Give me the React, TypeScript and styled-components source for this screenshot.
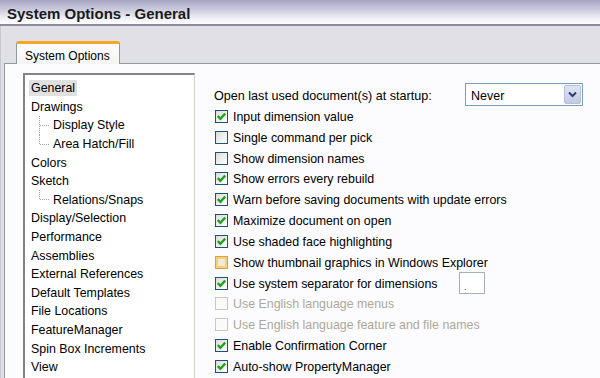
import React from "react";
import styled, { createGlobalStyle } from "styled-components";

const GlobalStyle = createGlobalStyle`
  html, body {
    margin: 0;
    padding: 0;
    width: 600px;
    height: 378px;
    overflow: hidden;
    background: #e1e0e6;
  }
  #root {
    height: 100%;
  }
`;

const navItems = [
  { label: "General", selected: true },
  { label: "Drawings" },
  { label: "Display Style", child: "mid" },
  { label: "Area Hatch/Fill", child: "last" },
  { label: "Colors" },
  { label: "Sketch" },
  { label: "Relations/Snaps", child: "last" },
  { label: "Display/Selection" },
  { label: "Performance" },
  { label: "Assemblies" },
  { label: "External References" },
  { label: "Default Templates" },
  { label: "File Locations" },
  { label: "FeatureManager" },
  { label: "Spin Box Increments" },
  { label: "View" },
];

type BoxState = "on" | "off" | "hover" | "disabled";

const options: { label: string; state: BoxState; extra?: boolean }[] = [
  { label: "Input dimension value", state: "on" },
  { label: "Single command per pick", state: "off" },
  { label: "Show dimension names", state: "off" },
  { label: "Show errors every rebuild", state: "on" },
  { label: "Warn before saving documents with update errors", state: "on" },
  { label: "Maximize document on open", state: "on" },
  { label: "Use shaded face highlighting", state: "on" },
  { label: "Show thumbnail graphics in Windows Explorer", state: "hover" },
  { label: "Use system separator for dimensions", state: "on", extra: true },
  { label: "Use English language menus", state: "disabled" },
  { label: "Use English language feature and file names", state: "disabled" },
  { label: "Enable Confirmation Corner", state: "on" },
  { label: "Auto-show PropertyManager", state: "on" },
];

function Connector({ kind }: { kind: string }) {
  // dotted tree lines for child nodes
  return (
    <ConnectorSvg width="12" height="19" viewBox="0 0 12 19">
      <line
        x1="0.5"
        y1="0"
        x2="0.5"
        y2={kind === "mid" ? 19 : 9.5}
        stroke="#a0a0a0"
        strokeDasharray="1 1"
      />
      <line x1="1" y1="9.5" x2="11" y2="9.5" stroke="#a0a0a0" strokeDasharray="1 1" />
    </ConnectorSvg>
  );
}

function Checkbox({ state }: { state: BoxState }) {
  return (
    <Box $state={state}>
      {state === "on" && (
        <svg width="9" height="9" viewBox="0 0 9 9">
          <path d="M0.8 4 L3.4 6.8 L8.2 1.6" stroke="#21a121" strokeWidth="2.4" fill="none" />
        </svg>
      )}
    </Box>
  );
}

export default function App() {
  return (
    <>
      <GlobalStyle />
      <Window>
        <TitleBar>System Options - General</TitleBar>
        <Body>
          <TabStrip>
            <Tab>System Options</Tab>
          </TabStrip>
          <Panel>
            <ListBox>
              {navItems.map((item) => (
                <NavRow key={item.label}>
                  {item.child && <Connector kind={item.child} />}
                  <NavLabel $selected={!!item.selected}>{item.label}</NavLabel>
                </NavRow>
              ))}
            </ListBox>
            <RightPane>
              <StartupRow>
                <StartupLabel>Open last used document(s) at startup:</StartupLabel>
                <Select>
                  <SelectValue>Never</SelectValue>
                  <SelectButton>
                    <svg width="9" height="7" viewBox="0 0 9 7">
                      <path d="M1 1.5 L4.5 5 L8 1.5" stroke="#2c3e6b" strokeWidth="2" fill="none" />
                    </svg>
                  </SelectButton>
                </Select>
              </StartupRow>
              {options.map((opt) => (
                <OptionRow key={opt.label}>
                  <Checkbox state={opt.state} />
                  <OptionLabel $disabled={opt.state === "disabled"} $wide={!!opt.extra}>
                    {opt.label}
                  </OptionLabel>
                  {opt.extra && <SmallInput>.</SmallInput>}
                </OptionRow>
              ))}
            </RightPane>
          </Panel>
        </Body>
      </Window>
    </>
  );
}

const Window = styled.div`
  width: 600px;
  height: 378px;
  display: flex;
  flex-direction: column;
  font-family: "Liberation Sans", Arial, sans-serif;
  color: #000;
`;

const TitleBar = styled.div`
  height: 26px;
  flex-shrink: 0;
  padding-left: 7px;
  display: flex;
  align-items: center;
  box-sizing: border-box;
  padding-top: 3px;
  font-size: 15px;
  font-weight: bold;
  color: #1a1a1a;
  background: linear-gradient(#a5a4c2 0%, #c6c6da 35%, #eeeef5 75%, #ffffff 100%);
  border-bottom: 2px solid #8a899e;
`;

const Body = styled.div`
  flex: 1;
  display: flex;
  flex-direction: column;
  padding-left: 3px;
  border-left: 1px solid #c9c8d0;
  background: #e1e0e6;
  min-height: 0;
`;

const TabStrip = styled.div`
  height: 37px;
  flex-shrink: 0;
  display: flex;
  align-items: flex-end;
  padding-left: 12px;
`;

const Tab = styled.div`
  width: 104px;
  height: 23px;
  box-sizing: border-box;
  padding-left: 8px;
  padding-top: 3px;
  display: flex;
  align-items: center;
  font-size: 12px;
  background: linear-gradient(#fcfcfe, #f4f4f2);
  border-top: 3px solid #f6a623;
  border-left: 1px solid #919b9c;
  border-right: 1px solid #919b9c;
  border-radius: 3px 3px 0 0;
  margin-bottom: -1px;
  position: relative;
  z-index: 1;
`;

const Panel = styled.div`
  flex: 1;
  display: flex;
  min-height: 0;
  background: #fcfcfe;
  border-top: 1px solid #919b9c;
  border-left: 1px solid #919b9c;
`;

const ListBox = styled.div`
  width: 172px;
  box-sizing: border-box;
  flex-shrink: 0;
  margin: 9px 0 0 18px;
  padding: 4px 0 0 4px;
  background: #fff;
  border-top: 2px solid #838383;
  border-left: 2px solid #838383;
  border-right: 1px solid #d4d0c8;
  display: flex;
  flex-direction: column;
`;

const NavRow = styled.div`
  height: 18.6px;
  display: flex;
  align-items: center;
  font-size: 12.4px;
  white-space: nowrap;
`;

const ConnectorSvg = styled.svg`
  margin-left: 10px;
  flex-shrink: 0;
`;

const NavLabel = styled.span<{ $selected: boolean }>`
  padding: 1px 2px;
  line-height: 14px;
  background: ${(p) => (p.$selected ? "#e0e0e0" : "transparent")};
`;

const RightPane = styled.div`
  flex: 1;
  padding: 19px 0 0 19px;
  display: flex;
  flex-direction: column;
  white-space: nowrap;
`;

const StartupRow = styled.div`
  height: 23px;
  display: flex;
  align-items: center;
`;

const StartupLabel = styled.span`
  width: 251px;
  flex-shrink: 0;
  font-size: 12.6px;
  padding-top: 2px;
`;

const Select = styled.div`
  width: 118px;
  height: 23px;
  box-sizing: border-box;
  border: 1px solid #7f9db9;
  background: #fff;
  display: flex;
  align-items: center;
  justify-content: space-between;
  padding: 1px;
`;

const SelectValue = styled.span`
  font-size: 12.5px;
  padding-left: 4px;
  padding-top: 2px;
`;

const SelectButton = styled.div`
  width: 17px;
  height: 19px;
  box-sizing: border-box;
  display: flex;
  align-items: center;
  justify-content: center;
  border: 1px solid #b4c0dc;
  border-radius: 2px;
  background: linear-gradient(#dfe4f2, #c2cbe3);
`;

const OptionRow = styled.div`
  height: 20.83px;
  display: flex;
  align-items: center;
  padding-left: 1px;
`;

const Box = styled.span<{ $state: BoxState }>`
  width: 13px;
  height: 13px;
  box-sizing: border-box;
  flex-shrink: 0;
  display: flex;
  align-items: center;
  justify-content: center;
  border: 1px solid
    ${(p) =>
      p.$state === "disabled" ? "#cac8bb" : p.$state === "hover" ? "#d6a24a" : "#1c5180"};
  background: ${(p) =>
    p.$state === "disabled"
      ? "#fafaf7"
      : p.$state === "hover"
      ? "#f1ead8"
      : "linear-gradient(135deg, #dcdcd7, #ffffff)"};
  box-shadow: ${(p) => (p.$state === "hover" ? "inset 0 0 0 2px #fbcf72" : "none")};
`;

const OptionLabel = styled.span<{ $disabled: boolean; $wide: boolean }>`
  margin-left: 5px;
  font-size: 12.4px;
  padding-top: 1px;
  color: ${(p) => (p.$disabled ? "#aca899" : "#000")};
  width: ${(p) => (p.$wide ? "226px" : "auto")};
  flex-shrink: 0;
`;

const SmallInput = styled.span`
  width: 26px;
  height: 22px;
  box-sizing: border-box;
  border: 1px solid #a9afb8;
  background: #fff;
  font-size: 9px;
  padding: 9px 0 0 4px;
  color: #333;
`;
